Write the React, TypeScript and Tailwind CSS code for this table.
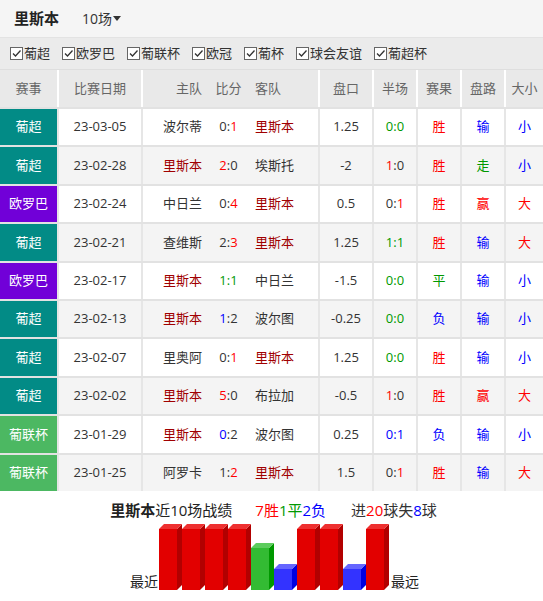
import React from "react";

type Row = {
  league: string;
  date: string;
  home: string;
  score: [string, string];
  away: string;
  line: string;
  half: [string, string];
  halfAll?: boolean;
  result: string;
  pan: string;
  size: string;
};

const rows: Row[] = [
  { league: "葡超", date: "23-03-05", home: "波尔蒂", score: ["0", "1"], away: "里斯本", line: "1.25", half: ["0", "0"], result: "胜", pan: "输", size: "小" },
  { league: "葡超", date: "23-02-28", home: "里斯本", score: ["2", "0"], away: "埃斯托", line: "-2", half: ["1", "0"], result: "胜", pan: "走", size: "小" },
  { league: "欧罗巴", date: "23-02-24", home: "中日兰", score: ["0", "4"], away: "里斯本", line: "0.5", half: ["0", "1"], result: "胜", pan: "赢", size: "大" },
  { league: "葡超", date: "23-02-21", home: "查维斯", score: ["2", "3"], away: "里斯本", line: "1.25", half: ["1", "1"], result: "胜", pan: "输", size: "大" },
  { league: "欧罗巴", date: "23-02-17", home: "里斯本", score: ["1", "1"], away: "中日兰", line: "-1.5", half: ["0", "0"], result: "平", pan: "输", size: "小" },
  { league: "葡超", date: "23-02-13", home: "里斯本", score: ["1", "2"], away: "波尔图", line: "-0.25", half: ["0", "0"], result: "负", pan: "输", size: "小" },
  { league: "葡超", date: "23-02-07", home: "里奥阿", score: ["0", "1"], away: "里斯本", line: "1.25", half: ["0", "0"], result: "胜", pan: "输", size: "小" },
  { league: "葡超", date: "23-02-02", home: "里斯本", score: ["5", "0"], away: "布拉加", line: "-0.5", half: ["1", "0"], result: "胜", pan: "赢", size: "大" },
  { league: "葡联杯", date: "23-01-29", home: "里斯本", score: ["0", "2"], away: "波尔图", line: "0.25", half: ["0", "1"], halfAll: true, result: "负", pan: "输", size: "小" },
  { league: "葡联杯", date: "23-01-25", home: "阿罗卡", score: ["1", "2"], away: "里斯本", line: "1.5", half: ["0", "1"], result: "胜", pan: "输", size: "大" },
];

const leagueBg: Record<string, string> = {
  葡超: "bg-[#028b86]",
  欧罗巴: "bg-[#7100d8]",
  葡联杯: "bg-[#4cb862]",
};

const filters = ["葡超", "欧罗巴", "葡联杯", "欧冠", "葡杯", "球会友谊", "葡超杯"];

const TEAM = "里斯本";
const cols = "grid-cols-[57px_84px_67px_41px_69px_54px_44px_44px_44px_39px]";

function wordColor(w: string) {
  if (w === "胜" || w === "赢" || w === "大") return "text-[#ff0000]";
  if (w === "平" || w === "走") return "text-[#009900]";
  return "text-[#0000ff]";
}

// colour the goals of 里斯本: red on win, blue on loss, green when level
function Score({ s, homeIsTeam, all }: { s: [string, string]; homeIsTeam: boolean; all?: boolean }) {
  const [h, a] = s.map(Number);
  if (h === a) {
    return <span className="text-[#009900]">{s[0]}:{s[1]}</span>;
  }
  const teamGoals = homeIsTeam ? h : a;
  const otherGoals = homeIsTeam ? a : h;
  const c = teamGoals > otherGoals ? "text-[#ff0000]" : "text-[#0000ff]";
  if (all) {
    return <span className={c}>{s[0]}:{s[1]}</span>;
  }
  return homeIsTeam ? (
    <span className="text-[#333]">
      <span className={c}>{s[0]}</span>:{s[1]}
    </span>
  ) : (
    <span className="text-[#333]">
      {s[0]}:<span className={c}>{s[1]}</span>
    </span>
  );
}

function Check() {
  return (
    <span className="mr-[1px] inline-flex h-[13px] w-[13px] items-center justify-center border border-[#666] bg-white">
      <svg width="11" height="11" viewBox="0 0 11 11">
        <path d="M2 5.5 L4.5 8 L9.5 2.5" fill="none" stroke="#333" strokeWidth="1.3" />
      </svg>
    </span>
  );
}

function Bar({ kind }: { kind: "w" | "d" | "l" }) {
  const h = kind === "w" ? 61 : kind === "d" ? 42 : 21;
  const c =
    kind === "w"
      ? { f: "#e20000", s: "#b20000", t: "#ee3030" }
      : kind === "d"
      ? { f: "#33bb33", s: "#009900", t: "#5dcc5d" }
      : { f: "#3333ff", s: "#0000e0", t: "#6666ff" };
  const total = h + 5;
  return (
    <svg width="23" height={total} viewBox={`0 0 23 ${total}`} className="block">
      <rect x="0" y="5" width="18" height={h} fill={c.f} />
      <polygon points={`18,5 23,0 23,${total - 5} 18,${total}`} fill={c.s} />
      <polygon points="0,5 5,0 23,0 18,5" fill={c.t} />
    </svg>
  );
}

export default function App() {
  const font = { fontFamily: '"Open Sans","Noto Sans CJK SC",sans-serif' };
  const bars: ("w" | "d" | "l")[] = ["w", "w", "w", "w", "d", "l", "w", "w", "l", "w"];
  return (
    <div className="w-[543px] bg-white text-[13px] text-[#333]" style={font}>
      <div className="flex h-[37px] items-center bg-[#f5f5f5] pl-[14px]">
        <span className="text-[15px] font-bold text-[#222]">里斯本</span>
        <span className="ml-[23px] flex items-center text-[14px] text-[#333]">
          10场
          <svg width="9" height="6" viewBox="0 0 9 6" className="ml-[1px]">
            <path d="M0 0 H8 L4 5 Z" fill="#333" />
          </svg>
        </span>
      </div>
      <div className="flex h-[32px] items-center gap-[12px] border-t border-[#e3e3e3] bg-[#ebebeb] pl-[10px]">
        {filters.map((f) => (
          <label key={f} className="flex items-center text-[13px] text-[#333]">
            <Check />
            {f}
          </label>
        ))}
      </div>
      <div className={`grid h-[38px] ${cols} border-t border-[#dedede] bg-[#e9e9e9] text-[#666]`}>
        <div className="flex items-center justify-center">赛事</div>
        <div className="flex items-center justify-center border-l-2 border-white">比赛日期</div>
        <div className="flex items-center justify-end border-l-2 border-white pr-[6px]">主队</div>
        <div className="flex items-center justify-center">比分</div>
        <div className="flex items-center pl-[6px]">客队</div>
        <div className="flex items-center justify-center border-l-2 border-white">盘口</div>
        <div className="flex items-center justify-center border-l-2 border-white">半场</div>
        <div className="flex items-center justify-center border-l-2 border-white">赛果</div>
        <div className="flex items-center justify-center border-l-2 border-white">盘路</div>
        <div className="flex items-center justify-center border-l-2 border-white">大小</div>
      </div>
      {rows.map((r, i) => {
        const homeIsTeam = r.home === TEAM;
        const cell = "flex items-center justify-center border-l-2 border-[#e6e6e6]";
        return (
          <div
            key={r.date}
            className={`grid h-[38.4px] ${cols} border-t-2 border-[#e2e2e2] ${
              i % 2 === 1 ? "bg-[#f4f4f4]" : "bg-white"
            }`}
          >
            <div className={`flex items-center justify-center text-white ${leagueBg[r.league]}`}>{r.league}</div>
            <div className={cell}>{r.date}</div>
            <div className={`flex items-center justify-end border-l-2 border-[#e6e6e6] pr-[6px] ${homeIsTeam ? "text-[#a00000]" : ""}`}>
              {r.home}
            </div>
            <div className="flex items-center justify-center">
              <Score s={r.score} homeIsTeam={homeIsTeam} />
            </div>
            <div className={`flex items-center pl-[6px] ${!homeIsTeam ? "text-[#a00000]" : ""}`}>{r.away}</div>
            <div className={cell}>{r.line}</div>
            <div className={cell}>
              <Score s={r.half} homeIsTeam={homeIsTeam} all={r.halfAll} />
            </div>
            <div className={`${cell} ${wordColor(r.result)}`}>{r.result}</div>
            <div className={`${cell} ${wordColor(r.pan)}`}>{r.pan}</div>
            <div className={`${cell} ${wordColor(r.size)}`}>{r.size}</div>
          </div>
        );
      })}
      <div className="flex flex-col items-center pt-[9px] pb-[11px]">
        <div className="flex pl-[4px] text-[15px] leading-[20px]">
          <span className="text-[#222]">
            <span className="font-bold">里斯本</span>近10场战绩
          </span>
          <span className="ml-[23px]">
            <span className="text-[#ff0000]">7胜</span>
            <span className="text-[#009900]">1平</span>
            <span className="text-[#0000ff]">2负</span>
          </span>
          <span className="ml-[25px] text-[#333]">
            进<span className="text-[#ff0000]">20</span>球失<span className="text-[#0000ff]">8</span>球
          </span>
        </div>
        <div className="mt-[4px] flex items-end pl-[6px]">
          <span className="mr-[1px] text-[14px] leading-[16px] text-[#222]">最近</span>
          {bars.map((b, i) => (
            <Bar key={i} kind={b} />
          ))}
          <span className="ml-[2px] text-[14px] leading-[16px] text-[#222]">最远</span>
        </div>
      </div>
    </div>
  );
}
